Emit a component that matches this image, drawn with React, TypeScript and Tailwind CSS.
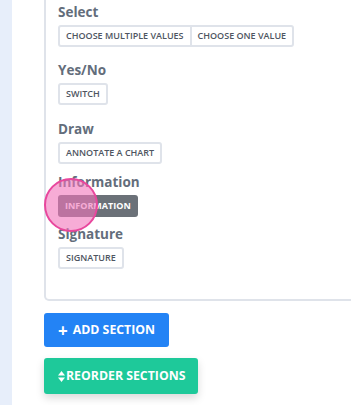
import React from "react";

const groups = [
  { label: "Select", items: ["Choose multiple values", "Choose one value"], gap: "mb-[13px]" },
  { label: "Yes/No", items: ["Switch"], gap: "mb-[14px]" },
  { label: "Draw", items: ["Annotate a chart"], gap: "mb-[8px]" },
  { label: "Information", items: ["Information"], gap: "mb-[7px]", active: true },
  { label: "Signature", items: ["Signature"], gap: "" },
];

function SortIcon() {
  return (
    <svg width="7" height="11" viewBox="0 0 7 11" className="fill-white">
      <path d="M3.5 0 L7 4.5 H0 Z" />
      <path d="M0 6.5 H7 L3.5 11 Z" />
    </svg>
  );
}

export default function App() {
  return (
    <div
      className="flex h-[405px] w-[351px] overflow-hidden bg-white"
      style={{ fontFamily: '"Open Sans", sans-serif' }}
    >
      <div className="w-[12px] shrink-0 bg-[#e7eefa]" />
      <div className="flex-1 pl-[32px]">
        <div className="-mr-[20px] rounded-b-[5px] border-2 border-t-0 border-[#dfe3ea] pb-[30px] pl-[12px] pt-[2px]">
          {groups.map((g) => (
            <div key={g.label} className={g.gap}>
              <div className="mb-[3px] text-[13.5px] font-bold leading-[20px] text-[#636d7b]">
                {g.label}
              </div>
              <div className="relative flex">
                {g.items.map((it, i) =>
                  g.active ? (
                    <div
                      key={it}
                      className="flex h-[22px] items-center rounded-[3px] bg-[#6b7178] px-[7px] text-[9px] font-bold uppercase text-white"
                    >
                      {it}
                    </div>
                  ) : (
                    <div
                      key={it}
                      className={`flex h-[22px] items-center border-2 border-[#dfe3ea] px-[6px] text-[9px] font-semibold uppercase text-[#4e5561] ${
                        g.items.length === 1
                          ? "rounded-[3px]"
                          : i === 0
                            ? "rounded-l-[3px]"
                            : "-ml-[2px] rounded-r-[3px]"
                      }`}
                    >
                      {it}
                    </div>
                  )
                )}
                {g.active && (
                  <div className="absolute left-[-14px] top-[-17px] h-[54px] w-[54px] rounded-full border-2 border-[#e8479d] bg-[#f174bb]/60" />
                )}
              </div>
            </div>
          ))}
        </div>
        <div className="mt-[12px] flex h-[34px] w-[125px] items-center gap-[5px] rounded-[3px] bg-[#2383f5] pl-[14px] text-[12.3px] font-bold text-white">
          <span className="text-[17px] leading-none">+</span>
          ADD SECTION
        </div>
        <div className="mt-[11px] flex h-[36px] w-[154px] items-center gap-[1px] rounded-[3px] bg-[#1ec99a] pl-[14px] text-[12.3px] font-bold text-white shadow-[0_4px_8px_rgba(0,0,0,0.15)]">
          <SortIcon />
          REORDER SECTIONS
        </div>
      </div>
    </div>
  );
}
